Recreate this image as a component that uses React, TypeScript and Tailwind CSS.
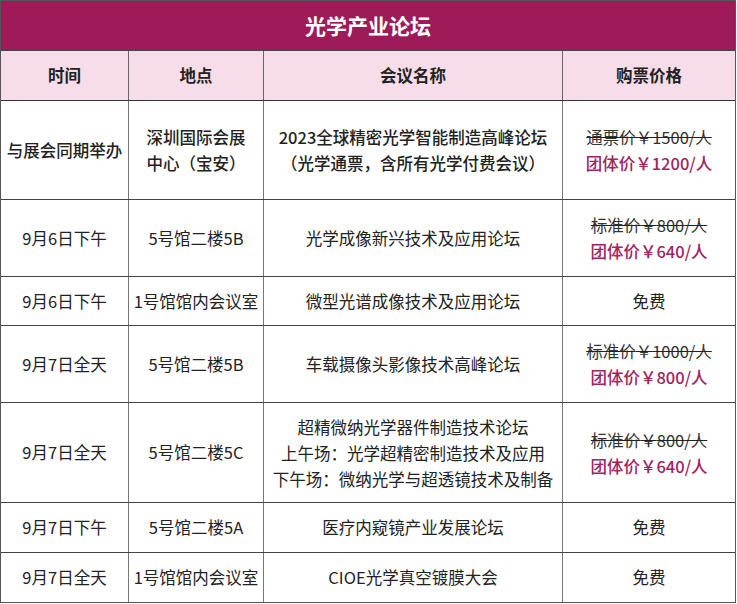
import React from "react";

type Row = {
  h: string;
  time: React.ReactNode;
  place: React.ReactNode;
  name: React.ReactNode;
  price: React.ReactNode;
  bold?: boolean;
};

const Price = ({ label, orig, group }: { label: string; orig: string; group: string }) => (
  <div className="flex flex-col items-center leading-[26px]">
    <span className="line-through decoration-[#222] text-[#333]">
      {label}￥{orig}/人
    </span>
    <span className="text-[#a1245f] font-medium">团体价￥{group}/人</span>
  </div>
);

const rows: Row[] = [
  {
    h: "h-[99px]",
    bold: true,
    time: "与展会同期举办",
    place: (
      <div className="text-left leading-[26px]">
        <div>深圳国际会展</div>
        <div>中心（宝安）</div>
      </div>
    ),
    name: (
      <div className="leading-[26px]">
        <div>2023全球精密光学智能制造高峰论坛</div>
        <div>（光学通票，含所有光学付费会议）</div>
      </div>
    ),
    price: (
      <div className="flex flex-col items-center leading-[26px] font-normal">
        <span className="line-through decoration-[#222] text-[#333]">通票价￥1500/人</span>
        <span className="text-[#a1245f] font-medium">团体价￥1200/人</span>
      </div>
    ),
  },
  {
    h: "h-[77px]",
    time: "9月6日下午",
    place: "5号馆二楼5B",
    name: "光学成像新兴技术及应用论坛",
    price: <Price label="标准价" orig="800" group="640" />,
  },
  {
    h: "h-[49px]",
    time: "9月6日下午",
    place: "1号馆馆内会议室",
    name: "微型光谱成像技术及应用论坛",
    price: "免费",
  },
  {
    h: "h-[77px]",
    time: "9月7日全天",
    place: "5号馆二楼5B",
    name: "车载摄像头影像技术高峰论坛",
    price: <Price label="标准价" orig="1000" group="800" />,
  },
  {
    h: "h-[100px]",
    time: "9月7日全天",
    place: "5号馆二楼5C",
    name: (
      <div className="leading-[26px]">
        <div>超精微纳光学器件制造技术论坛</div>
        <div>上午场：光学超精密制造技术及应用</div>
        <div>下午场：微纳光学与超透镜技术及制备</div>
      </div>
    ),
    price: <Price label="标准价" orig="800" group="640" />,
  },
  {
    h: "h-[50px]",
    time: "9月7日下午",
    place: "5号馆二楼5A",
    name: "医疗内窥镜产业发展论坛",
    price: "免费",
  },
  {
    h: "h-[49px]",
    time: "9月7日全天",
    place: "1号馆馆内会议室",
    name: "CIOE光学真空镀膜大会",
    price: "免费",
  },
];

const cell = "flex items-center justify-center text-center";

export default function App() {
  return (
    <div
      className="w-[737px] h-[604px] bg-white text-[#222] text-[16.5px]"
      style={{ fontFamily: '"Noto Sans CJK SC", "Noto Sans", sans-serif' }}
    >
      <div className="w-[736px] border border-[#555]">
        <div className="h-[50px] bg-[#9e1a58] border-b border-[#444] flex items-center justify-center text-white text-[21px] font-bold">
          光学产业论坛
        </div>
        <div className="grid grid-cols-[128px_135px_299px_172px] h-[50px] bg-[#f6dde9] border-b border-[#333] font-bold">
          <div className={`${cell} border-r border-[#666]`}>时间</div>
          <div className={`${cell} border-r border-[#666]`}>地点</div>
          <div className={`${cell} border-r border-[#666]`}>会议名称</div>
          <div className={cell}>购票价格</div>
        </div>
        {rows.map((r, i) => (
          <div
            key={i}
            className={`grid grid-cols-[128px_135px_299px_172px] ${r.h} ${
              i < rows.length - 1 ? "border-b border-[#444]" : ""
            } ${r.bold ? "font-medium" : ""}`}
          >
            <div className={`${cell} border-r border-[#777]`}>{r.time}</div>
            <div className={`${cell} border-r border-[#777]`}>{r.place}</div>
            <div className={`${cell} border-r border-[#777]`}>{r.name}</div>
            <div className={cell}>{r.price}</div>
          </div>
        ))}
      </div>
    </div>
  );
}
